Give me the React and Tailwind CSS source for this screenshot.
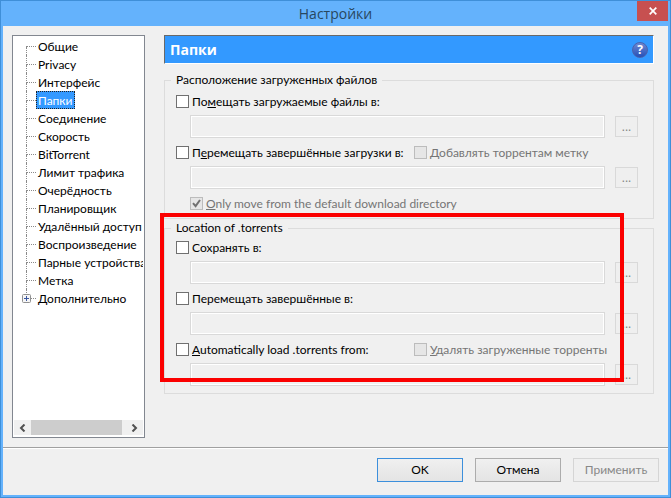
import { useState } from "react";

const SECTIONS = [
  "Общие",
  "Privacy",
  "Интерфейс",
  "Папки",
  "Соединение",
  "Скорость",
  "BitTorrent",
  "Лимит трафика",
  "Очерёдность",
  "Планировщик",
  "Удалённый доступ",
  "Воспроизведение",
  "Парные устройства",
  "Метка",
  "Дополнительно",
];

/* ---------------- TREE ---------------- */

function Branch({ first, last }) {
  return (
    <span aria-hidden="true" className="relative flex h-[18px] w-[10px] shrink-0 flex-col">
      <span
        className={`h-[10px] border-b border-dotted border-b-[#8a8a8a] ${
          first ? "" : "border-l border-l-[#8a8a8a]"
        }`}
      />
      {!last && <span className="h-[8px] border-l border-dotted border-[#8a8a8a]" />}
      {last && (
        <svg viewBox="0 0 9 9" className="absolute top-[5px] -left-[4px] size-[9px]">
          <rect x="0.5" y="0.5" width="8" height="8" rx="1" fill="#f6f6f6" stroke="#919191" />
          <path d="M2 4.5h5M4.5 2v5" stroke="#3b57a0" fill="none" />
        </svg>
      )}
    </span>
  );
}

function SectionTree({ active, onSelect }) {
  return (
    <nav className="flex w-[133px] shrink-0 flex-col overflow-hidden border border-[#828790] bg-white px-px pt-px pb-[2px]">
      <ul className="flex-1 overflow-hidden pl-[12px]">
        {SECTIONS.map((name, i) => (
          <li key={name} className="flex h-[18px] items-center">
            <Branch first={i === 0} last={i === SECTIONS.length - 1} />
            <button
              type="button"
              onClick={() => onSelect(name)}
              className={`h-[18px] border border-dotted px-px leading-[15px] whitespace-nowrap ${
                active === name
                  ? "border-[#222] bg-[#3399ff] text-white"
                  : "border-transparent"
              }`}
            >
              {name}
            </button>
          </li>
        ))}
      </ul>
      <div className="flex h-[15px] bg-[#f0f0f0]">
        <button type="button" aria-label="Влево" className="flex w-[17px] items-center justify-center">
          <svg viewBox="0 0 7 8" className="h-[8px] w-[7px]">
            <path d="M5.5 0.5L2 4l3.5 3.5" fill="none" stroke="#505050" strokeWidth="2" />
          </svg>
        </button>
        <div className="mr-[4px] flex-1 bg-[#cdcdcd]" />
        <button type="button" aria-label="Вправо" className="flex w-[17px] items-center justify-center">
          <svg viewBox="0 0 7 8" className="h-[8px] w-[7px]">
            <path d="M1.5 0.5L5 4 1.5 7.5" fill="none" stroke="#505050" strokeWidth="2" />
          </svg>
        </button>
      </div>
    </nav>
  );
}

/* ---------------- FORM PARTS ---------------- */

function Check({ children, disabled, defaultChecked }) {
  return (
    <label
      className={`flex h-[19px] items-center gap-[3px] whitespace-nowrap ${
        disabled ? "text-[#757575]" : ""
      }`}
    >
      <span className="grid shrink-0">
        <input
          type="checkbox"
          disabled={disabled}
          defaultChecked={defaultChecked}
          className="peer col-start-1 row-start-1 size-[13px] appearance-none border border-[#707070] bg-white disabled:border-[#bcbcbc] disabled:bg-[#e6e6e6]"
        />
        <svg
          viewBox="0 0 13 13"
          className="pointer-events-none invisible col-start-1 row-start-1 size-[13px] peer-checked:visible"
        >
          <path d="M3 6.2l2.6 3L10 3" fill="none" stroke="#707070" strokeWidth="2" />
        </svg>
      </span>
      <span>{children}</span>
    </label>
  );
}

function PathRow({ label }) {
  return (
    <div className="ml-[14px] flex items-center gap-[10px]">
      <input
        type="text"
        disabled
        aria-label={label}
        className="h-[23px] min-w-0 flex-1 border border-[#d9d9d9] bg-[#f0f0f0] px-1 inset-ring inset-ring-white"
      />
      <button
        type="button"
        disabled
        aria-label={`Обзор: ${label}`}
        className="h-[21px] w-[23px] border border-[#d9d9d9] bg-[#efefef] font-['Open_Sans',sans-serif] leading-[19px] text-[#838383]"
      >
        ...
      </button>
    </div>
  );
}

function Group({ title, className, children }) {
  return (
    <fieldset className={`min-w-0 border border-[#dcdcdc] pr-[15px] pl-[11px] ${className}`}>
      <legend className="-ml-[5px] h-[18px] px-[5px] leading-[18px]">{title}</legend>
      <div className="flex flex-col gap-[5px]">{children}</div>
    </fieldset>
  );
}

function DialogButton({ children, className, ...props }) {
  return (
    <button
      type="button"
      className={`h-[24px] w-[86px] border leading-[20px] ${className}`}
      {...props}
    >
      {children}
    </button>
  );
}

/* ---------------- MAIN ---------------- */

export default function App() {
  const [active, setActive] = useState("Папки");

  return (
    <div className="flex min-h-screen flex-col border border-[#3f8fd8] bg-[#64b2fc] px-[2px] pb-[2px] font-['Lato','Open_Sans',sans-serif] text-[12px] text-black">
      <header className="grid h-[25px] grid-cols-[1fr_auto_1fr]">
        <h1 className="col-start-2 font-['Open_Sans','Noto_Sans',sans-serif] text-[14px] leading-[25px] text-[#28475f]">
          Настройки
        </h1>
        <button
          type="button"
          aria-label="Закрыть"
          className="flex h-[20px] w-[31px] items-center justify-center justify-self-end bg-[#c75050]"
        >
          <svg viewBox="0 0 8 8" className="size-[8px]">
            <path d="M0.7 0.7l6.6 6.6M7.3 0.7L0.7 7.3" stroke="#fff" strokeWidth="1.7" />
          </svg>
        </button>
      </header>

      <div className="flex flex-1 flex-col bg-[#f0f0f0]">
        <div className="flex flex-1 gap-[19px] py-[9px] pr-[14px] pl-[9px]">
          <SectionTree active={active} onSelect={setActive} />

          <main className="min-w-0 flex-1">
            <div className="mb-[7px] flex h-[29px] items-center justify-between border border-t-[#696969] border-r-white border-b-white border-l-[#696969] bg-[#3399ff] pr-[5px] pl-[5px]">
              <h2 className="font-['Open_Sans','Noto_Sans',sans-serif] text-[14px] leading-[26px] font-bold text-white">
                Папки
              </h2>
              <button
                type="button"
                aria-label="Справка"
                className="size-[16px] rounded-full border border-[#4a62ad] bg-linear-to-b from-[#6f87d0] to-[#2450b8] font-['Open_Sans',sans-serif] text-[12px] leading-[14px] font-bold text-white"
              >
                ?
              </button>
            </div>

            <Group title="Расположение загруженных файлов" className="pt-[3px] pb-[5px]">
              <div className="flex flex-col gap-[4px]">
                <Check>
                  По<u>м</u>ещать загружаемые файлы в:
                </Check>
                <PathRow label="Помещать загружаемые файлы в" />
              </div>
              <div className="flex flex-col gap-[4px]">
                <div className="grid grid-cols-[238px_1fr]">
                  <Check>
                    П<u>е</u>ремещать завершённые загрузки в:
                  </Check>
                  <Check disabled>
                    <u>Д</u>обавлять торрентам метку
                  </Check>
                </div>
                <PathRow label="Перемещать завершённые загрузки в" />
              </div>
              <div className="ml-[14px]">
                <Check disabled defaultChecked>
                  <u>O</u>nly move from the default download directory
                </Check>
              </div>
            </Group>

            <div className="relative">
              <Group title="Location of .torrents" className="pt-px pb-[7px]">
                <div className="flex flex-col gap-[4px]">
                  <Check>Сохранять в:</Check>
                  <PathRow label="Сохранять в" />
                </div>
                <div className="flex flex-col gap-[4px]">
                  <Check>Перемещать завершённые в:</Check>
                  <PathRow label="Перемещать завершённые в" />
                </div>
                <div className="flex flex-col gap-[4px]">
                  <div className="grid grid-cols-[238px_1fr]">
                    <Check>
                      <u>A</u>utomatically load .torrents from:
                    </Check>
                    <Check disabled>
                      <u>У</u>далять загруженные торренты
                    </Check>
                  </div>
                  <PathRow label="Automatically load .torrents from" />
                </div>
              </Group>
              {/* highlight frame around the .torrents options */}
              <div className="pointer-events-none absolute -top-[6px] right-[30px] bottom-[12px] -left-[4px] border-4 border-[#fb0000]" />
            </div>
          </main>
        </div>

        <footer className="flex justify-end gap-[12px] border-t border-[#a0a0a0] pt-[10px] pr-[9px] pb-[13px] inset-shadow-[0_1px_0_#fff]">
          <DialogButton className="border-[#3c8fdc] bg-linear-to-b from-[#f0f0f0] to-[#e4e4e4]">
            OK
          </DialogButton>
          <DialogButton className="border-[#acacac] bg-linear-to-b from-[#f0f0f0] to-[#e4e4e4]">
            Отмена
          </DialogButton>
          <DialogButton disabled className="border-[#d5d5d5] bg-[#efefef] text-[#888]">
            Применить
          </DialogButton>
        </footer>
      </div>
    </div>
  );
}
